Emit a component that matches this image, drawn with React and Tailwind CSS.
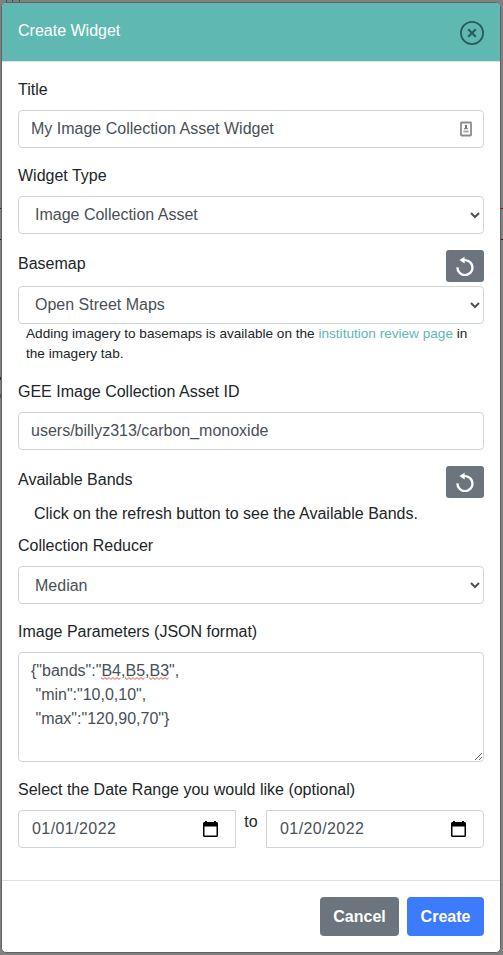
import React from "react";

const field =
  "block w-full h-[38px] rounded border border-[#ced4da] bg-white text-[#495057] text-base leading-6 px-3 py-1.5";
const raisedField =
  "block w-full h-[38px] rounded border border-[#ced4da] bg-white text-[#495057] text-base leading-6 px-3 pt-[5px] pb-[7px]";
const label = "block h-6 leading-6 mb-2";

function Select({ value, className = field }) {
  return (
    <select className={className} defaultValue={value}>
      <option>{value}</option>
    </select>
  );
}

function RefreshButton() {
  return (
    <button className="flex h-8 w-[38px] items-center justify-center rounded-[3px] bg-[#6c757d] text-white">
      <svg width="20" height="20" viewBox="0 0 20 20" fill="none">
        <path d="M8.4 4.1 H10 A7.5 7.5 0 1 1 2.5 11.4" stroke="currentColor" strokeWidth="2.4" />
        <path d="M4.4 4.1 L9.6 0.8 V7.6 Z" fill="currentColor" />
      </svg>
    </button>
  );
}

function DateField({ value, shape }) {
  return (
    <div
      className={
        "flex h-[38px] w-[218px] items-center justify-between border border-[#ced4da] pl-[13px] pr-4 text-[#495057] " +
        shape
      }
    >
      <span className="leading-6 tracking-[0.42px]">{value}</span>
      <svg width="16" height="18" viewBox="0 0 16 18">
        <path
          fill="#000"
          fillRule="evenodd"
          d="M2 1h2v1h7V1h2v1h.5A1.5 1.5 0 0 1 15 3.5v12a1.5 1.5 0 0 1-1.5 1.5h-12A1.5 1.5 0 0 1 0 15.500v-12A1.5 1.5 0 0 1 1.500 2H2zM1.500 6.500v9h12v-9z"
        />
      </svg>
    </div>
  );
}

function Misspelled({ children }) {
  return (
    <span className="relative">
      {children}
      <svg className="absolute bottom-[-1px] left-0 h-[3px] w-full" aria-hidden="true">
        <defs>
          <pattern id="wave" width="4" height="3" patternUnits="userSpaceOnUse">
            <path d="M0 .6 L2 2.4 L4 .6" fill="none" stroke="#f0554a" strokeWidth="1" />
          </pattern>
        </defs>
        <rect width="100%" height="3" fill="url(#wave)" />
      </svg>
    </span>
  );
}

function Backdrop() {
  return (
    <div className="absolute inset-0 bg-[#808080]" aria-hidden="true">
      <div className="absolute left-1.5 top-0 h-[3px] w-px bg-[#2f5b58]" />
      <div className="absolute left-3 top-0 h-[3px] w-px bg-[#2f5b58]" />
      <div className="absolute left-[19px] top-0 h-[3px] w-px bg-[#2f5b58]" />
      <div className="absolute top-[208px] h-px w-full bg-[#800010]" />
      <div className="absolute top-[239px] h-px w-full bg-[#600010]" />
      <div className="absolute left-0 top-[377px] h-[3px] w-2 bg-[#20305c]" />
      <div className="absolute left-0 top-[394px] h-1 w-2 bg-[#555]" />
    </div>
  );
}

export default function App() {
  return (
    <div className="relative h-[955px] w-[503px] overflow-hidden pl-px pt-0.5 font-['Liberation_Sans',Arial,sans-serif] text-base text-[#212529]">
      <Backdrop />
      <div className="relative flex h-[951px] w-[500px] flex-col overflow-hidden rounded-[5px] border border-[#636363] bg-white">
        <header className="flex h-[59px] shrink-0 items-start justify-between border-b border-[#dee2e6] bg-[#5fb8b2] px-4 text-white">
          <h5 className="mt-4 leading-6">Create Widget</h5>
          <button aria-label="Close" className="mt-[18px]">
            <svg width="24" height="24" viewBox="0 0 24 24" fill="none" stroke="#275f5b">
              <circle cx="12" cy="12" r="11.1" strokeWidth="1.8" />
              <path d="M8.2 8.2l7.6 7.6M15.8 8.2l-7.6 7.6" strokeWidth="2.2" />
            </svg>
          </button>
        </header>

        <main className="flex-1 px-4 pt-4">
          <div className="mb-4">
            <label className={label}>Title</label>
            <div className={field + " flex items-center justify-between"}>
              <span className="leading-6">My Image Collection Asset Widget</span>
              <svg width="12" height="16" viewBox="0 0 12 16" className="-mr-px" fill="none">
                <rect x="1" y="1.5" width="10" height="13" rx="0.5" stroke="#8b8b8b" strokeWidth="1.8" />
                <path d="M6 4v4" stroke="#666" strokeWidth="1.8" />
                <path d="M4 7.6h4" stroke="#888" strokeWidth="1.4" />
                <path d="M3.4 10.6h5.2" stroke="#aaa" strokeWidth="2" />
              </svg>
            </div>
          </div>

          <div className="mb-4">
            <label className={label}>Widget Type</label>
            <Select value="Image Collection Asset" className={raisedField} />
          </div>

          <div className="mb-4">
            <div className="mb-1 flex justify-between">
              <label className="mt-0.5 leading-6">Basemap</label>
              <RefreshButton />
            </div>
            <Select value="Open Street Maps" className={raisedField} />
            <p className="h-10 pl-2 pr-2 text-[13.6px] leading-5">
              Adding imagery to basemaps is available on the{" "}
              <a className="text-[#5fb8b2]">institution review page</a> in the imagery tab.
            </p>
          </div>

          <div className="mb-4">
            <label className={label}>GEE Image Collection Asset ID</label>
            <input className={field} defaultValue="users/billyz313/carbon_monoxide" />
          </div>

          <div className="mb-1 flex h-8 justify-between">
            <label className="mt-0.5 leading-6">Available Bands</label>
            <RefreshButton />
          </div>
          <p className="mb-2 pl-4 leading-6">Click on the refresh button to see the Available Bands.</p>

          <div className="mb-4">
            <label className={label}>Collection Reducer</label>
            <Select value="Median" />
          </div>

          <div className="mb-4">
            <label className={label}>Image Parameters (JSON format)</label>
            <div className="h-[110px] resize-y overflow-auto whitespace-pre rounded border border-[#ced4da] px-3 py-1.5 leading-6 text-[#495057]">
              <div>
                {'{"bands":"'}
                <Misspelled>B4</Misspelled>,<Misspelled>B5</Misspelled>,<Misspelled>B3</Misspelled>
                {'",'}
              </div>
              <div>{' "min":"10,0,10",'}</div>
              <div>{' "max":"120,90,70"}'}</div>
            </div>
          </div>

          <label className={label}>Select the Date Range you would like (optional)</label>
          <div className="flex justify-between">
            <DateField value="01/01/2022" shape="rounded-l" />
            <span className="leading-6">to</span>
            <DateField value="01/20/2022" shape="rounded-r" />
          </div>
        </main>

        <footer className="flex h-[72px] shrink-0 justify-end gap-2 border-t border-[#dee2e6] px-4 pt-4 font-bold text-white">
          <button className="h-[39px] w-[79px] rounded bg-[#6c757d]">Cancel</button>
          <button className="h-[39px] w-[77px] rounded bg-[#3d7bfd]">Create</button>
        </footer>
      </div>
    </div>
  );
}
